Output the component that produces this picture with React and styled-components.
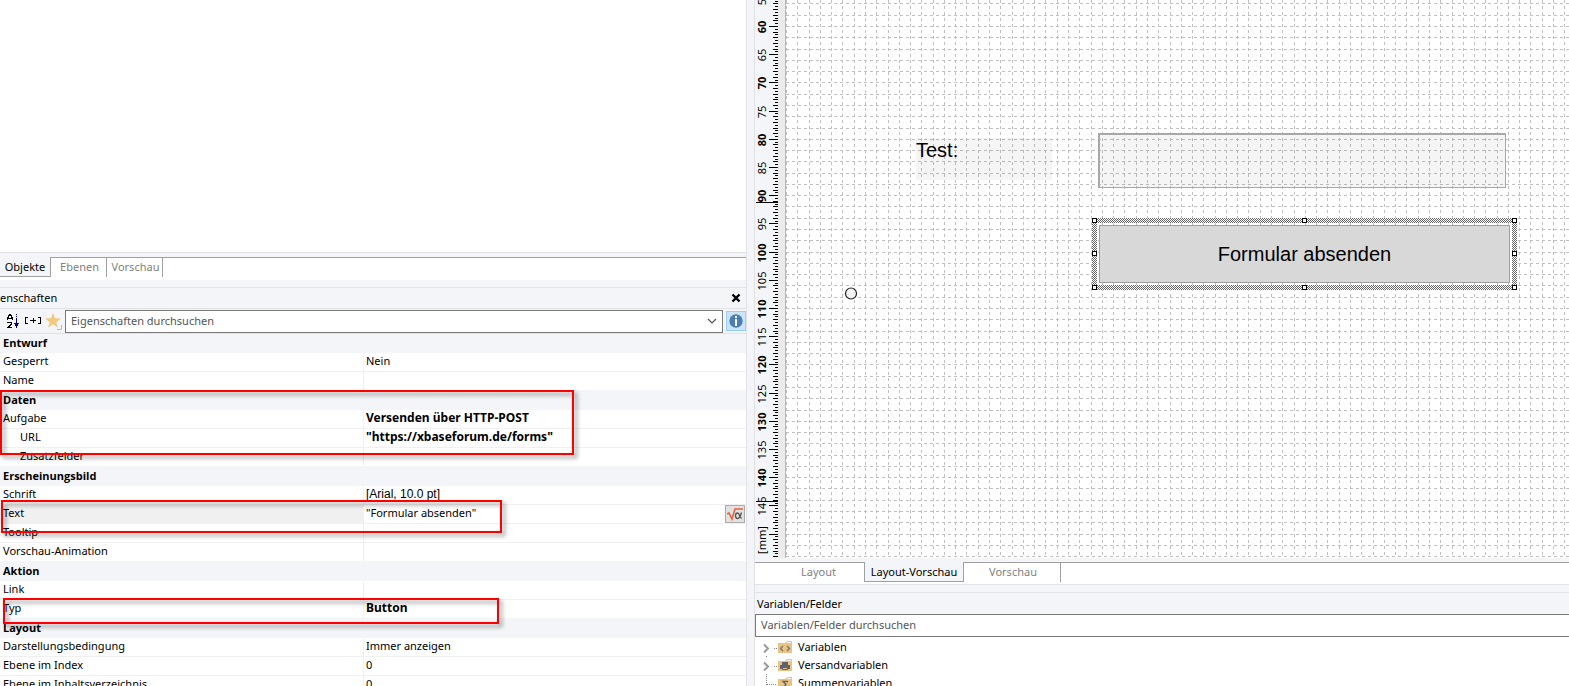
import React from 'react';
import styled, { createGlobalStyle, css } from 'styled-components';

const colors = {
  panel: '#f4f5f8',
  line: '#e1e2e5',
  tabLine: '#a0a0a0',
  inputLine: '#7a7a7a',
  rowLine: '#f0f0f0',
  muted: '#7f7f7f',
  grid: '#c0c0c0',
  folder: '#eac282',
};

const GlobalStyle = createGlobalStyle`
  * {
    box-sizing: border-box;
  }

  body {
    margin: 0;
    background: ${colors.panel};
    color: #000;
    font: 11px/16px 'Noto Sans', 'Open Sans', sans-serif;
  }

  button,
  input {
    font: inherit;
    margin: 0;
  }
`;

const Workspace = styled.div`
  display: grid;
  grid-template-columns: minmax(0, 747fr) 7px minmax(0, 815fr);
  height: 100vh;
  overflow: hidden;
`;

const LeftPane = styled.section`
  display: flex;
  flex-direction: column;
  min-height: 0;
  border-right: 1px solid ${colors.line};
`;

const RightPane = styled.section`
  grid-column: 3;
  display: flex;
  flex-direction: column;
  min-height: 0;
  border-left: 1px solid ${colors.line};
`;

const ObjectList = styled.div`
  flex: none;
  height: 253px;
  margin-bottom: 4px;
  background: #fff;
  border-bottom: 1px solid ${colors.line};
`;

const TabStrip = styled.div`
  display: flex;
  flex: none;
  align-items: flex-start;
  height: 23px;
  background: #fff;
  border-top: 1px solid ${colors.tabLine};
  ${props =>
    props.$underlined &&
    css`
      border-bottom: 1px solid ${colors.line};
    `}
`;

const Tab = styled.button`
  height: 19px;
  width: ${props => props.$width}px;
  padding: 0 0 2px ${props => props.$indent || 2}px;
  border: 0;
  border-right: 1px solid ${props => (props.$divided ? colors.tabLine : 'transparent')};
  background: none;
  color: ${colors.muted};
  line-height: 16px;
  white-space: nowrap;

  &[aria-selected='true'] {
    height: 20px;
    margin-top: -1px;
    padding: 0;
    background: ${colors.panel};
    border-right-color: ${colors.tabLine};
    border-bottom: 1px solid ${colors.tabLine};
    color: #000;
  }
`;

const PanelTitle = styled.h2`
  display: flex;
  flex: none;
  align-items: center;
  justify-content: space-between;
  height: ${props => props.$height}px;
  margin: 7px 0 0;
  padding: ${props => props.$padding};
  border-top: 1px solid ${colors.line};
  font-size: 11px;
  font-weight: 400;
`;

const IconButton = styled.button`
  display: grid;
  place-items: center;
  flex: none;
  width: 20px;
  height: 20px;
  padding: 0;
  border: 0;
  background: none;
`;

const InfoButton = styled(IconButton)`
  margin-left: 3px;
  background: #cce4f9;
  border: 1px solid #99ccff;
`;

const FormulaButton = styled(IconButton)`
  height: 18px;
  margin-right: 1px;
  background: #e1e1e1;
  border: 1px solid #adadad;
`;

const Toolbar = styled.div`
  display: flex;
  flex: none;
  align-items: center;
  height: 26px;
  padding-left: 3px;
  border-top: 1px solid ${colors.line};
  border-bottom: 1px solid ${colors.line};
`;

const Combo = styled.div`
  display: flex;
  flex: 1;
  height: 23px;
  margin-left: 2px;
  background: #fff;
  border: 1px solid ${colors.inputLine};
`;

const SearchInput = styled.input`
  flex: 1;
  min-width: 0;
  padding: 0 5px 1px;
  border: 0;
  outline: 0;
  background: #fff;
  color: #000;

  &::placeholder {
    color: #555;
    opacity: 1;
  }
`;

const PropertyArea = styled.div`
  position: relative;
  flex: 1;
  min-height: 0;
  overflow: hidden;
  background: #fff;
`;

const PropertyTable = styled.table`
  width: 100%;
  table-layout: fixed;
  border-collapse: separate;
  border-spacing: 0;

  th,
  td {
    height: 19px;
    padding: 0 0 2px 2px;
    line-height: 16px;
    text-align: left;
    vertical-align: top;
    white-space: nowrap;
  }
`;

const NameColumn = styled.col`
  width: 364px;
`;

const Category = styled.th`
  && {
    padding: 1px 0 2px 3px;
  }
  background: ${colors.panel};
  font-family: 'Open Sans', 'Noto Sans', sans-serif;
  font-weight: 700;
`;

const Name = styled.th`
  && {
    padding-left: ${props => (props.$nested ? 20 : 3)}px;
  }
  background: ${props => (props.$selected ? '#f0f0f0' : '#fff')};
  border-right: 1px solid ${colors.rowLine};
  border-bottom: 1px solid ${props => (props.$last ? colors.panel : colors.rowLine)};
  font-weight: 400;
`;

const Value = styled.td`
  border-bottom: 1px solid ${props => (props.$last ? colors.panel : colors.rowLine)};
  ${props =>
    props.$bold &&
    css`
      font-size: 12px;
      font-weight: 700;
    `}
  ${props =>
    props.$arial &&
    css`
      font-family: Arial, 'Liberation Sans', sans-serif;
      font-size: 12px;
    `}
`;

const ValueLine = styled.div`
  display: flex;
  justify-content: space-between;
  height: 16px;
`;

const Marker = styled.div`
  position: absolute;
  left: ${props => props.$left}px;
  top: ${props => props.$top}px;
  width: ${props => props.$width}px;
  height: ${props => props.$height}px;
  border: 2px solid #f00;
  filter: drop-shadow(3px 3px 2px rgba(0, 0, 0, 0.45));
  pointer-events: none;
`;

const Designer = styled.div`
  display: flex;
  flex: none;
  height: 558px;
  margin-bottom: 4px;
`;

const Ruler = styled.svg`
  flex: none;
  width: 31px;
  height: 100%;
  font-family: 'Noto Sans', 'Open Sans', sans-serif;
  font-size: 11px;
`;

const Sheet = styled.div`
  position: relative;
  flex: 1;
  min-width: 0;
  overflow: hidden;
  background: #fff;
  font: 20px/24px Arial, 'Liberation Sans', sans-serif;
`;

const GridLines = styled.svg`
  display: block;
  width: 100%;
  height: 100%;
`;

const FieldLabel = styled.label`
  position: absolute;
  left: 130px;
  top: 138px;
  width: 136px;
  height: 42px;
  background: rgba(0, 0, 0, 0.04);
`;

const FormField = styled.input`
  position: absolute;
  left: 312px;
  top: 133px;
  width: 408px;
  height: 55px;
  background: rgba(0, 0, 0, 0.04);
  border: 1px solid #a8a8a8;
  border-width: 2px 1px 1px 2px;
  outline: 0;
`;

const Selection = styled.div`
  position: absolute;
  left: 306px;
  top: 218px;
  width: 425px;
  height: 72px;
`;

const HatchFrame = styled.svg`
  position: absolute;
  inset: 0;
  width: 100%;
  height: 100%;
`;

const SubmitButton = styled.button`
  position: absolute;
  inset: 7px;
  padding: 0;
  background: #d8d8d8;
  border: 1px solid #a0a0a0;
  color: #000;
`;

const TreeSearch = styled.div`
  display: flex;
  flex: none;
  height: 23px;
  border: 1px solid ${colors.inputLine};
  border-right: 0;
`;

const Tree = styled.ul`
  flex: 1;
  min-height: 0;
  margin: 0;
  padding: 1px 0 0 7px;
  list-style: none;
  background: #fff;
  overflow: hidden;
`;

const TreeItem = styled.li`
  display: flex;
  align-items: center;
  gap: 6px;
  height: 18px;
`;

const groups = [
  {
    title: 'Entwurf',
    rows: [{ name: 'Gesperrt', value: 'Nein' }, { name: 'Name' }],
  },
  {
    title: 'Daten',
    rows: [
      { name: 'Aufgabe', value: 'Versenden über HTTP-POST', bold: true },
      { name: 'URL', value: '"https://xbaseforum.de/forms"', bold: true, nested: true },
      { name: 'Zusatzfelder', nested: true },
    ],
  },
  {
    title: 'Erscheinungsbild',
    rows: [
      { name: 'Schrift', value: '[Arial, 10.0 pt]', arial: true },
      { name: 'Text', value: '"Formular absenden"', selected: true },
      { name: 'Tooltip' },
      { name: 'Vorschau-Animation' },
    ],
  },
  {
    title: 'Aktion',
    rows: [{ name: 'Link' }, { name: 'Typ', value: 'Button', bold: true }],
  },
  {
    title: 'Layout',
    rows: [
      { name: 'Darstellungsbedingung', value: 'Immer anzeigen' },
      { name: 'Ebene im Index', value: '0' },
      { name: 'Ebene im Inhaltsverzeichnis', value: '0' },
    ],
  },
];

const SortIcon = () => (
  <svg width="14" height="16" viewBox="0 0 14 16" fill="none" shapeRendering="crispEdges">
    <path d="M1 7V4h1V2h1V1h1v1h1v2h1v3M2 5h4M1 9.5h5M5 10v1H4v1H3v1H2v1H1M1 14.5h5" stroke="#000" />
    <path d="M10.5 1v1M10.5 3v1M10.5 5v7" stroke="#000080" />
    <path d="M8 10h5v1h-1v2h-1v2h-1v-2H9v-2H8z" fill="#000080" />
  </svg>
);

const ExpandIcon = () => (
  <svg width="16" height="8" viewBox="0 0 16 8" fill="none" stroke="#000" shapeRendering="crispEdges">
    <path d="M3 .5H.5v6H3M13 .5h2.5v6H13M5 3.5h6M8 1v5" />
  </svg>
);

const StarIcon = () => (
  <svg width="18" height="18" viewBox="0 0 18 18">
    <path d="M9 1l2 5.300 6 .2-4.700 3.700 1.700 5.300-5-3.200-5 3.200 1.700-5.300L1 6.500l6-.2z" fill="#f0c87e" />
    <path d="M17.500 13v4.500H13" fill="none" stroke="#b8b8b8" />
  </svg>
);

const CloseIcon = () => (
  <svg width="10" height="10" viewBox="0 0 10 10">
    <path d="M1.500 1.500l7 7M8.500 1.500l-7 7" stroke="#000" strokeWidth="2.400" />
  </svg>
);

const ChevronIcon = () => (
  <svg width="10" height="6" viewBox="0 0 10 6">
    <path d="M1 1l4 4 4-4" fill="none" stroke="#555" strokeWidth="1.200" />
  </svg>
);

const InfoIcon = () => (
  <svg width="14" height="14" viewBox="0 0 14 14">
    <circle cx="7" cy="7" r="6.700" fill="#4a7eb5" />
    <path d="M6 5h2v7H6zM6 2h2v2H6z" fill="#fff" />
  </svg>
);

const FormulaIcon = () => (
  <svg width="16" height="14" viewBox="0 0 16 14" fill="none">
    <path d="M0 7l2-1 3 6L8 2h8" stroke="#e8603c" strokeWidth="1.600" />
    <path
      d="M14.500 5.500c-1 3.500-2 6-4 6-1.300 0-2-1-2-2.800S9.300 6 10.700 6c2 0 2 5.500 4 5.500"
      stroke="#555"
      strokeWidth="1.300"
    />
  </svg>
);

const folderGlyphs = {
  code: <path d="M21 8l-2.500 2.500L21 13M25 8l2.500 2.500L25 13" fill="none" stroke="#777" strokeWidth="1.400" />,
  print: (
    <g fill="#5c6270">
      <path d="M20 6h6v3h-6zM18 9h10v4H18z" />
      <path d="M20.500 11.500h5v2h-5z" fill="#eac282" stroke="#5c6270" />
    </g>
  ),
  sum: <path d="M26 7.500h-5l3 3-3 3h5" fill="none" stroke="#666" strokeWidth="1.300" />,
};

const TreeIcon = ({ glyph, expandable, last }) => (
  <svg width="30" height="18" viewBox="0 0 30 18">
    {expandable && (
      <path d="M2 6.500l4 4-4 4" fill="none" stroke="#9a9a9a" strokeWidth="2" />
    )}
    {last && <path d="M4.500 0v11" stroke="#888" strokeDasharray="1 1" />}
    {glyph === 'print' && <path d="M4.500 0v2" stroke="#888" strokeDasharray="1 1" />}
    <path d={last ? 'M5 10.500h10' : 'M12 10.500h4'} stroke="#888" strokeDasharray="1 1" />
    <path d="M16 5h7l2-2h5v12H16z" fill={colors.folder} />
    <path d="M25 4.500h4" stroke="#fff" />
    {folderGlyphs[glyph]}
  </svg>
);

// Vertical ruler: 5.64px per millimetre, the 60 mm mark sits at y = 26
const MM = 5.64;
const mmToY = mm => Math.round(26 + (mm - 60) * MM);

const ticks = Array.from({ length: 200 }, (_, i) => 55 + i / 2).filter(mm => mmToY(mm) < 557);
const labels = Array.from({ length: 19 }, (_, i) => 55 + i * 5);

const tickStart = mm => {
  if (mm % 5 === 0) return 14;
  return mm % 1 === 0 ? 18 : 20;
};

const VerticalRuler = () => (
  <Ruler role="img" aria-label="mm">
    <rect x="23" width="8" height="100%" fill="#ebebeb" />
    <path d="M30.500 0v558" stroke="#b8b8b8" />
    <g stroke="#000" shapeRendering="crispEdges">
      {ticks.map(mm => (
        <path key={mm} d={`M${tickStart(mm)} ${mmToY(mm) + 0.5}H23`} />
      ))}
      <path d="M1 202.500h22M1 501.500h22" />
    </g>
    {labels.map(mm => (
      <text
        key={mm}
        transform={`translate(11 ${mmToY(mm) + 1}) rotate(-90)`}
        textAnchor="middle"
        fontWeight={mm % 10 === 0 ? 700 : 400}
      >
        {mm}
      </text>
    ))}
    <text transform="translate(11 540) rotate(-90)" textAnchor="middle">
      [mm]
    </text>
  </Ruler>
);

const columns = Array.from({ length: 200 }, (_, i) => Math.round(i * MM * 2));
const rows = Array.from({ length: 50 }, (_, i) => mmToY(56 + i * 2));

const DesignGrid = () => (
  <GridLines>
    <g stroke={colors.grid} strokeDasharray="3 3" shapeRendering="crispEdges">
      {columns.map(x => (
        <path key={x} d={`M${x + 0.5} 0V558`} />
      ))}
      {rows.map(y => (
        <path key={y} d={`M0 ${y + 0.5}H2300`} />
      ))}
    </g>
    <circle cx="65" cy="293.500" r="5.500" fill="#f4f4f4" stroke="#222" strokeWidth="1.200" />
  </GridLines>
);

const handles = [
  [0, 0],
  [210, 0],
  [420, 0],
  [0, 33],
  [420, 33],
  [0, 67],
  [210, 67],
  [420, 67],
];

const SelectedButton = () => (
  <Selection>
    <HatchFrame viewBox="0 0 425 72" shapeRendering="crispEdges">
      <defs>
        <pattern id="hatch" width="2" height="2" patternUnits="userSpaceOnUse">
          <rect width="2" height="2" fill="#fff" />
          <path d="M0 0h1v1H0zM1 1h1v1H1z" fill="#666" />
        </pattern>
      </defs>
      <path d="M0 0h425v72H0zM5 5v62h415V5z" fill="url(#hatch)" />
      {handles.map(([x, y]) => (
        <rect key={`${x}-${y}`} x={x + 0.5} y={y + 0.5} width="4" height="4" fill="#fff" stroke="#000" />
      ))}
    </HatchFrame>
    <SubmitButton type="button">Formular absenden</SubmitButton>
  </Selection>
);

const PropertyRow = ({ row, last }) => (
  <tr>
    <Name scope="row" $nested={row.nested} $selected={row.selected} $last={last}>
      {row.name}
    </Name>
    <Value $bold={row.bold} $arial={row.arial} $last={last}>
      {row.selected ? (
        <ValueLine>
          {row.value}
          <FormulaButton type="button" aria-label="Formel">
            <FormulaIcon />
          </FormulaButton>
        </ValueLine>
      ) : (
        row.value
      )}
    </Value>
  </tr>
);

const Properties = () => (
  <PropertyArea>
    <PropertyTable>
      <colgroup>
        <NameColumn />
        <col />
      </colgroup>
      {groups.map(group => (
        <tbody key={group.title}>
          <tr>
            <Category colSpan={2}>{group.title}</Category>
          </tr>
          {group.rows.map((row, i) => (
            <PropertyRow key={row.name} row={row} last={i === group.rows.length - 1} />
          ))}
        </tbody>
      ))}
    </PropertyTable>
    <Marker $left={0} $top={56} $width={574} $height={65} />
    <Marker $left={1} $top={166} $width={501} $height={33} />
    <Marker $left={3} $top={264} $width={496} $height={26} />
  </PropertyArea>
);

const App = () => (
  <Workspace>
    <GlobalStyle />
    <LeftPane>
      <ObjectList />
      <TabStrip role="tablist">
        <Tab role="tab" aria-selected="true" $width={51}>Objekte</Tab>
        <Tab role="tab" aria-selected="false" $width={56} $divided>Ebenen</Tab>
        <Tab role="tab" aria-selected="false" $width={56} $divided>Vorschau</Tab>
      </TabStrip>
      <PanelTitle $height={21} $padding="0">
        enschaften
        <IconButton type="button" aria-label="Schließen">
          <CloseIcon />
        </IconButton>
      </PanelTitle>
      <Toolbar>
        <IconButton type="button" aria-label="Sortieren"><SortIcon /></IconButton>
        <IconButton type="button" aria-label="Erweitern"><ExpandIcon /></IconButton>
        <IconButton type="button" aria-label="Favoriten"><StarIcon /></IconButton>
        <Combo>
          <SearchInput placeholder="Eigenschaften durchsuchen" aria-label="Eigenschaften durchsuchen" />
          <IconButton type="button" aria-label="Verlauf"><ChevronIcon /></IconButton>
        </Combo>
        <InfoButton type="button" aria-label="Info"><InfoIcon /></InfoButton>
      </Toolbar>
      <Properties />
    </LeftPane>
    <RightPane>
      <Designer>
        <VerticalRuler />
        <Sheet>
          <DesignGrid />
          <FieldLabel htmlFor="test">Test:</FieldLabel>
          <FormField id="test" />
          <SelectedButton />
        </Sheet>
      </Designer>
      <TabStrip role="tablist" $underlined>
        <Tab role="tab" aria-selected="false" $width={110} $indent={18} $divided>Layout</Tab>
        <Tab role="tab" aria-selected="true" $width={99}>Layout-Vorschau</Tab>
        <Tab role="tab" aria-selected="false" $width={97} $divided>Vorschau</Tab>
      </TabStrip>
      <PanelTitle $height={22} $padding="0 2px">Variablen/Felder</PanelTitle>
      <TreeSearch>
        <SearchInput placeholder="Variablen/Felder durchsuchen" aria-label="Variablen/Felder durchsuchen" />
      </TreeSearch>
      <Tree>
        <TreeItem><TreeIcon glyph="code" expandable />Variablen</TreeItem>
        <TreeItem><TreeIcon glyph="print" expandable />Versandvariablen</TreeItem>
        <TreeItem><TreeIcon glyph="sum" last />Summenvariablen</TreeItem>
      </Tree>
    </RightPane>
  </Workspace>
);

export default App;
